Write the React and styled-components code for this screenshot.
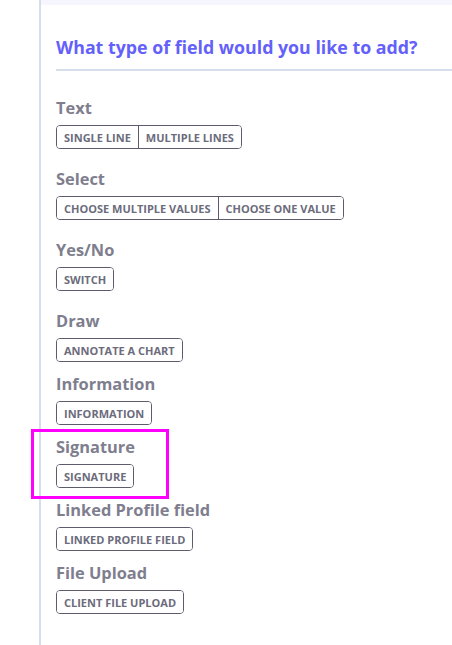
import React from 'react';
import styled, { createGlobalStyle } from 'styled-components';

const GlobalStyle = createGlobalStyle`
  html, body {
    margin: 0;
    padding: 0;
    background: #ffffff;
  }
  body {
    font-family: "Open Sans", "Noto Sans", sans-serif;
  }
`;

const Page = styled.div`
  display: flex;
  min-height: 645px;
  padding-left: 39px;
  box-sizing: border-box;
`;

const Panel = styled.div`
  flex: 1;
  border-left: 2px solid #d5deea;
  display: flex;
  flex-direction: column;
`;

const TopBand = styled.div`
  height: 5px;
  background: #f5f6fe;
`;

const Content = styled.div`
  padding: 30px 0 0 15px;
  display: flex;
  flex-direction: column;
`;

const Title = styled.h2`
  margin: 0;
  font-size: 17.8px;
  line-height: 24px;
  font-weight: 700;
  color: #6461fb;
  padding-bottom: 10px;
  border-bottom: 2px solid #d5deea;
`;

const List = styled.div`
  display: flex;
  flex-direction: column;
  padding-top: 26px;
`;

const Section = styled.div`
  position: relative;
  display: flex;
  flex-direction: column;
  align-items: flex-start;
  margin-bottom: ${p => (p.$wide ? 19 : 11)}px;

  ${p => p.$highlight && `
    &::after {
      content: '';
      position: absolute;
      left: -25px;
      top: -7px;
      width: 138px;
      height: 70px;
      box-sizing: border-box;
      border: 3px solid #ff00ff;
      pointer-events: none;
    }
  `}
`;

const Heading = styled.div`
  font-size: 16.4px;
  line-height: 22px;
  font-weight: 700;
  color: #7e7e8e;
  margin-bottom: 6px;
`;

const Group = styled.div`
  display: inline-flex;
  border: 1px solid #5c5c6c;
  border-radius: 4px;
  overflow: hidden;
`;

const Option = styled.button`
  height: 22px;
  padding: 0 7px;
  background: #ffffff;
  border: none;
  border-left: ${p => (p.$first ? 'none' : '1px solid #5c5c6c')};
  font-family: "Open Sans", "Noto Sans", sans-serif;
  font-size: 11px;
  font-weight: 700;
  text-transform: uppercase;
  color: #6c6c7c;
  cursor: pointer;
`;

const fieldTypes = [
  { title: 'Text', options: ['Single line', 'Multiple lines'], wide: true },
  { title: 'Select', options: ['Choose multiple values', 'Choose one value'], wide: true },
  { title: 'Yes/No', options: ['Switch'], wide: true },
  { title: 'Draw', options: ['Annotate a chart'] },
  { title: 'Information', options: ['Information'] },
  { title: 'Signature', options: ['Signature'], highlight: true },
  { title: 'Linked Profile field', options: ['Linked profile field'] },
  { title: 'File Upload', options: ['Client file upload'] },
];

export default function App() {
  return (
    <>
      <GlobalStyle />
      <Page>
        <Panel>
          <TopBand />
          <Content>
            <Title>What type of field would you like to add?</Title>
            <List>
              {fieldTypes.map(type => (
                <Section key={type.title} $wide={type.wide} $highlight={type.highlight}>
                  <Heading>{type.title}</Heading>
                  <Group>
                    {type.options.map((opt, i) => (
                      <Option key={opt} $first={i === 0}>{opt}</Option>
                    ))}
                  </Group>
                </Section>
              ))}
            </List>
          </Content>
        </Panel>
      </Page>
    </>
  );
}
